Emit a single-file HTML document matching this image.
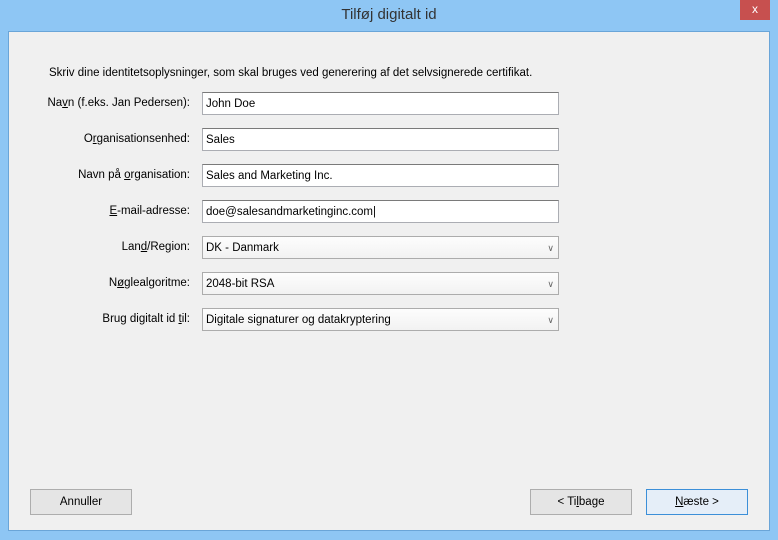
<!DOCTYPE html>
<html><head><style>
*{margin:0;padding:0;box-sizing:border-box}
body{width:778px;height:540px;background:#8ec6f4;font-family:"Liberation Sans",sans-serif;font-size:11.5px;color:#000;position:relative;overflow:hidden}
.title{position:absolute;left:0;top:0;width:778px;height:31px;text-align:center;line-height:29px;font-size:15px;color:#333}
.close{position:absolute;left:740px;top:0;width:30px;height:20px;background:#c7504f;color:#fff;text-align:center;line-height:19px;font-size:12px}
.client{position:absolute;left:8px;top:31px;width:762px;height:500px;background:#f0f0f0;border:1px solid #6aa5d8}
.intro{position:absolute;left:49px;top:67px;white-space:nowrap}
.lbl{position:absolute;right:588px;white-space:nowrap}
.in{position:absolute;left:202px;width:357px;height:23px;background:#fff;border:1px solid #abadb3;border-top-color:#7a7a7a;padding-left:3px;line-height:22px}
.sel{border-color:#acacac;background:linear-gradient(#fdfdfd,#f2f2f2);}
.arr{position:absolute;right:4px;top:0;color:#666;font-size:9px}
.btn{position:absolute;top:489px;height:26px;width:102px;border:1px solid #adadad;background:#e5e5e5;text-align:center;line-height:25px}
</style></head><body>
<div class="title">Tilføj digitalt id</div>
<div class="close">x</div>
<div class="client"></div>
<div class="intro">Skriv dine identitetsoplysninger, som skal bruges ved generering af det selvsignerede certifikat.</div>
<div class="lbl" style="top:97px">Na<u>v</u>n (f.eks. Jan Pedersen):</div>
<div class="in" style="top:92px">John Doe</div>
<div class="lbl" style="top:133px">O<u>r</u>ganisationsenhed:</div>
<div class="in" style="top:128px">Sales</div>
<div class="lbl" style="top:169px">Navn på <u>o</u>rganisation:</div>
<div class="in" style="top:164px">Sales and Marketing Inc.</div>
<div class="lbl" style="top:205px"><u>E</u>-mail-adresse:</div>
<div class="in" style="top:200px">doe@salesandmarketinginc.com|</div>
<div class="lbl" style="top:241px">Lan<u>d</u>/Region:</div>
<div class="in sel" style="top:236px">DK - Danmark<span class="arr">&#8744;</span></div>
<div class="lbl" style="top:277px">N<u>ø</u>glealgoritme:</div>
<div class="in sel" style="top:272px">2048-bit RSA<span class="arr">&#8744;</span></div>
<div class="lbl" style="top:313px">Brug digitalt id <u>t</u>il:</div>
<div class="in sel" style="top:308px">Digitale signaturer og datakryptering<span class="arr">&#8744;</span></div>
<div class="btn" style="left:30px">Annuller</div>
<div class="btn" style="left:530px">&lt; Ti<u>l</u>bage</div>
<div class="btn" style="left:646px;border-color:#3c8fd8;background:#e5eef8"><u>N</u>æste &gt;</div>
</body></html>
